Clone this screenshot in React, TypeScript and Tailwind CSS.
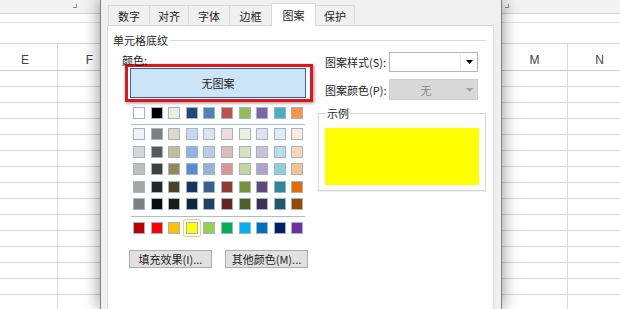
import React from 'react';

const themeTop = ['#FFFFFF', '#000000', '#EEECE1', '#1F497D', '#4F81BD', '#C0504D', '#9BBB59', '#8064A2', '#4BACC6', '#F79646'];

const themeShades = [
  ['#F2F2F2', '#7F7F7F', '#DDD9C3', '#C6D9F0', '#DBE5F1', '#F2DCDB', '#EBF1DD', '#E5E0EC', '#DBEEF3', '#FDEADA'],
  ['#D8D8D8', '#595959', '#C4BD97', '#8DB3E2', '#B8CCE4', '#E5B9B7', '#D7E3BC', '#CCC1D9', '#B7DDE8', '#FBD5B5'],
  ['#BFBFBF', '#3F3F3F', '#938953', '#548DD4', '#95B3D7', '#D99694', '#C3D69B', '#B2A2C7', '#92CDDC', '#FAC08F'],
  ['#A5A5A5', '#262626', '#494429', '#17365D', '#366092', '#953734', '#76923C', '#5F497A', '#31859B', '#E36C09'],
  ['#7F7F7F', '#0C0C0C', '#1D1B10', '#0F243E', '#244061', '#632423', '#4F6128', '#3F3151', '#205867', '#974806'],
];

const standard = ['#C00000', '#FF0000', '#FFC000', '#FFFF00', '#92D050', '#00B050', '#00B0F0', '#0070C0', '#002060', '#7030A0'];

const tabs = [
  { label: '数字', cls: 'w-[42px]' },
  { label: '对齐', cls: 'w-[40px]' },
  { label: '字体', cls: 'w-[42px]' },
  { label: '边框', cls: 'w-[43px]' },
  { label: '图案', cls: 'w-[45px]', active: true },
  { label: '保护', cls: 'w-[40px]' },
];

const Swatch: React.FC<{ color: string; selected?: boolean }> = ({ color, selected }) => (
  <div className="relative h-[12px] w-[12px] border border-[#a3b4c9]" style={{ backgroundColor: color }}>
    {selected && <div className="absolute -inset-[4px] rounded-[2px] border-[1.5px] border-[#e8d873]" />}
  </div>
);

const Arrow: React.FC<{ color: string }> = ({ color }) => (
  <svg width="7" height="4" viewBox="0 0 7 4">
    <polygon points="0,0 7,0 3.5,4" fill={color} />
  </svg>
);

interface Col {
  label: string;
  cls: string;
}

// 背景里的表格
const Sheet: React.FC<{ cols: Col[]; shift: string; mark: string }> = ({ cols, shift, mark }) => {
  const rows = Array.from({ length: 15 });
  return (
    <div className="h-full overflow-hidden bg-white">
      <div className={`flex h-[14px] border-b border-[#d4d4d4] bg-[#f3f3f3] pt-[4px] ${mark}`}>
        <div className="h-[4px] w-[4px] border-r border-b border-[#8a8a8a]" />
      </div>
      <div className="h-[30px] border-b border-[#d4d4d4]">
        <div className="h-[9px] border-b border-[#e3e3e3]" />
      </div>
      <div className={`flex h-[27px] border-b border-[#c8ccd4] ${shift}`}>
        {cols.map((c) => (
          <div
            key={c.label}
            className={`flex shrink-0 items-center justify-center border-r border-[#d6dbe4] pt-[6px] font-['Liberation_Sans',sans-serif] text-[12px] text-[#444] ${c.cls}`}
          >
            {c.label}
          </div>
        ))}
      </div>
      {rows.map((_, i) => (
        <div key={i} className={`flex h-[16px] border-b border-[#d3d9e4] ${shift}`}>
          {cols.map((c) => (
            <div key={c.label} className={`shrink-0 border-r border-[#d6dbe4] ${c.cls}`} />
          ))}
        </div>
      ))}
    </div>
  );
};

export default function App() {
  return (
    <div className="flex h-[309px] w-[620px] overflow-hidden bg-white font-['Noto_Sans_CJK_SC','Noto_Sans',sans-serif] text-[11px] text-[#1e1e1e]">
      <div className="w-[100px] shrink-0">
        <Sheet
          shift="-ml-[7px]"
          mark="pl-[73px]"
          cols={[
            { label: 'E', cls: 'w-[65px]' },
            { label: 'F', cls: 'w-[64px]' },
          ]}
        />
      </div>

      <div className="relative z-10 h-full w-[402px] shrink-0 overflow-hidden border-x border-[#808080] bg-[#f0f0f0] pt-[3px] pr-[7px] pl-[6px] shadow-[0_0_16px_rgba(0,0,0,0.45)]">
        {/* 选项卡 */}
        <div className="ml-[1px] flex h-[22px] items-end">
          {tabs.map((t) =>
            t.active ? (
              <div
                key={t.label}
                className={`relative z-10 -mb-px -ml-px flex h-[23px] items-center justify-center border border-b-0 border-[#d9d9d9] bg-white leading-[14px] ${t.cls}`}
              >
                {t.label}
              </div>
            ) : (
              <div
                key={t.label}
                className={`-ml-px flex h-[20px] items-center justify-center border border-b-0 border-[#d9d9d9] bg-[#f0f0f0] pt-[1px] leading-[14px] first:ml-0 ${t.cls}`}
              >
                {t.label}
              </div>
            )
          )}
        </div>

        <div className="h-[300px] border border-[#d9d9d9] bg-white pt-[6px] pr-[7px] pl-[5px]">
          <div className="flex h-[16px] items-center">
            <span className="leading-[16px]">单元格底纹</span>
            <div className="ml-[2px] h-px flex-1 bg-[#d5d5d5]" />
          </div>

          <div className="flex">
            {/* 颜色 */}
            <div className="ml-[9px] w-[191px] shrink-0">
              <div className="mt-[4px] h-[16px] leading-[16px]">颜色:</div>
              <div className="-mt-[4px] ml-[3px] flex h-[38px] w-[188px] items-center border-[3px] border-[#e5141b] pl-[2px] shadow-[1px_1px_3px_rgba(0,0,0,0.45)]">
                <div className="flex h-[30px] w-[176px] items-center justify-center border border-[#2f67a4] bg-[#cce4f7] leading-[14px]">
                  无图案
                </div>
              </div>

              <div className="mt-[5px] ml-[11px]">
                <div className="grid grid-cols-[repeat(10,12px)] gap-x-[5.6px]">
                  {themeTop.map((c) => (
                    <Swatch key={c} color={c} />
                  ))}
                </div>
                <div className="mt-[5px] -ml-[2px] h-px w-[174px] bg-[#a9bfd9]" />
                <div className="mt-[3px] grid grid-cols-[repeat(10,12px)] gap-x-[5.6px] gap-y-[5.6px]">
                  {themeShades.flat().map((c, i) => (
                    <Swatch key={i} color={c} />
                  ))}
                </div>
                <div className="mt-[5.6px] -ml-[2px] h-px w-[174px] bg-[#a9bfd9]" />
                <div className="mt-[5px] grid grid-cols-[repeat(10,12px)] gap-x-[5.6px]">
                  {standard.map((c) => (
                    <Swatch key={c} color={c} selected={c === '#FFFF00'} />
                  ))}
                </div>
              </div>

              <div className="mt-[16px] ml-[7px] flex gap-[13px]">
                <div className="flex h-[18px] w-[83px] items-center justify-center border border-[#adadad] bg-[#e1e1e1] leading-[14px]">
                  填充效果(I)...
                </div>
                <div className="flex h-[18px] w-[83px] items-center justify-center border border-[#adadad] bg-[#e1e1e1] leading-[14px]">
                  其他颜色(M)...
                </div>
              </div>
            </div>

            {/* 图案 */}
            <div className="ml-[5px] w-[168px] shrink-0">
              <div className="mt-[4px] flex h-[20px] items-center">
                <span className="ml-[7px] w-[64px] leading-[16px]">图案样式(S):</span>
                <div className="flex h-[20px] w-[89px] border border-[#b4b4b4] bg-white">
                  <div className="m-[1px] flex-1 border-r border-[#e6e6e6]" />
                  <div className="flex w-[15px] items-center justify-center">
                    <Arrow color="#000" />
                  </div>
                </div>
              </div>

              <div className="mt-[7px] flex h-[21px] items-center">
                <span className="ml-[7px] w-[64px] leading-[16px]">图案颜色(P):</span>
                <div className="flex h-[21px] w-[89px] border border-[#cccccc] bg-[#d9d9d9]">
                  <div className="flex flex-1 items-center justify-center leading-[14px] text-[#8a8a8a]">无</div>
                  <div className="flex w-[15px] items-center justify-center">
                    <Arrow color="#a3a3a3" />
                  </div>
                </div>
              </div>

              <div className="relative mt-[13px] h-[78px] border border-[#d7d7d7] shadow-[0_1px_1px_rgba(0,0,0,0.06)]">
                <span className="absolute -top-[8px] left-[7px] bg-white px-[1px] leading-[14px]">示例</span>
                <div className="mt-[14px] ml-[6px] h-[57px] w-[154px] bg-[#ffff00]" />
              </div>
            </div>
          </div>
        </div>
      </div>

      <div className="w-[118px] shrink-0">
        <Sheet
          shift=""
          mark="pl-[3px]"
          cols={[
            { label: 'M', cls: 'w-[66px]' },
            { label: 'N', cls: 'w-[64px]' },
          ]}
        />
      </div>
    </div>
  );
}
